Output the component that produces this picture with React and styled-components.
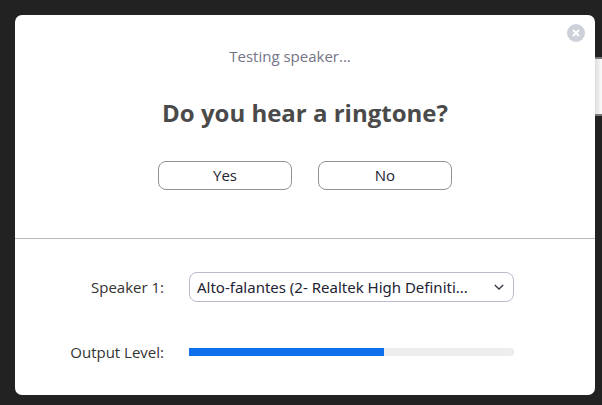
import styled, { createGlobalStyle } from 'styled-components';


const GlobalStyle = createGlobalStyle`
    * {
        box-sizing: border-box;
    }
    body {
        margin: 0;
        background-color: #222222;
        font-family: "Segoe UI", "Open Sans", "Noto Sans", sans-serif;
        font-size: 15px;
        color: #232333;
    }
    button, select {
        font: inherit;
        color: inherit;
    }
`
const Page = styled.div`
    position: relative;
    min-height: 100vh;
    padding: 15px 7px 10px 15px;
    display: flex;
    overflow: hidden;
`
/* window that stays open behind the dialog */
const BackWindow = styled.div`
    position: absolute;
    top: 57px;
    right: 0;
    width: 7px;
    height: 59px;
    background: linear-gradient(to right, #dedede, #fafafa);
    border-top: 2px solid #777777;
    border-bottom: 2px solid #777777;
`
const Dialog = styled.main`
    position: relative;
    flex: 1;
    display: flex;
    flex-direction: column;
    background-color: white;
    border-radius: 7px;
`
const CloseButton = styled.button`
    position: absolute;
    top: 9px;
    right: 10px;
    width: 18px;
    height: 18px;
    padding: 0;
    border: none;
    border-radius: 50%;
    background-color: #cbd0d9;
    cursor: pointer;
    svg {
        display: block;
    }
`
const Question = styled.section`
    display: flex;
    flex-direction: column;
    align-items: center;
    padding: 29px 0 48px;
    border-bottom: 1px solid #b9b9bb;
`
const Status = styled.p`
    margin: 0;
    padding-right: 30px;
    line-height: 24px;
    color: #747487;
`
const Title = styled.h1`
    margin: 29px 0 32px;
    font-size: 24px;
    font-weight: 700;
    line-height: 32px;
    color: #4a4a4a;
`
const Answers = styled.div`
    display: flex;
    gap: 26px;
`
const Answer = styled.button`
    width: 134px;
    height: 29px;
    padding: 0 0 2px;
    background-color: white;
    border: 1px solid #909096;
    border-radius: 8px;
    cursor: pointer;
`
const Settings = styled.section`
    display: grid;
    grid-template-columns: 149px 1fr;
    column-gap: 25px;
    row-gap: 35px;
    align-items: center;
    padding: 33px 81px 28px 0;
`
const Label = styled.label`
    text-align: right;
    line-height: 30px;
    color: #333333;
`
const SelectBox = styled.div`
    display: grid;
    align-items: center;
    > * {
        grid-area: 1 / 1;
    }
    svg {
        justify-self: end;
        margin-right: 9px;
        pointer-events: none;
    }
`
const Select = styled.select`
    appearance: none;
    width: 100%;
    height: 30px;
    padding: 0 32px 0 7px;
    font-family: "Noto Sans", sans-serif;
    background-color: white;
    border: 1px solid #babacc;
    border-radius: 8px;
    text-overflow: ellipsis;
`
const Level = styled.div`
    height: 8px;
    background-color: #ededed;
    border-radius: 3px;
`
const LevelFill = styled.div`
    height: 100%;
    background-color: #0e71eb;
`

const App = () => {
    const level = 60
    return (
        <>
            <GlobalStyle />
            <Page>
                <BackWindow />
                <Dialog>
                    <Question>
                        <Status>Testing speaker...</Status>
                        <Title>Do you hear a ringtone?</Title>
                        <Answers>
                            <Answer type="button">Yes</Answer>
                            <Answer type="button">No</Answer>
                        </Answers>
                    </Question>
                    <Settings>
                        <Label htmlFor="speaker">Speaker 1:</Label>
                        <SelectBox>
                            <Select id="speaker">
                                <option>Alto-falantes (2- Realtek High Definiti...</option>
                            </Select>
                            <svg width="12" height="12" viewBox="0 0 12 12" fill="none" stroke="#3a3a4a" strokeWidth="1.4">
                                <path d="M1.8 4l4.2 4 4.2-4" />
                            </svg>
                        </SelectBox>
                        <Label as="span" id="level-label">Output Level:</Label>
                        <Level role="meter" aria-labelledby="level-label" aria-valuenow={level} aria-valuemin={0} aria-valuemax={100}>
                            <LevelFill style={{ width: `${level}%` }} />
                        </Level>
                    </Settings>
                    <CloseButton type="button" aria-label="Close">
                        <svg width="18" height="18" viewBox="0 0 18 18" stroke="white" strokeWidth="2">
                            <path d="M6 6l6 6M12 6l-6 6" />
                        </svg>
                    </CloseButton>
                </Dialog>
            </Page>
        </>
    )
}

export default App
